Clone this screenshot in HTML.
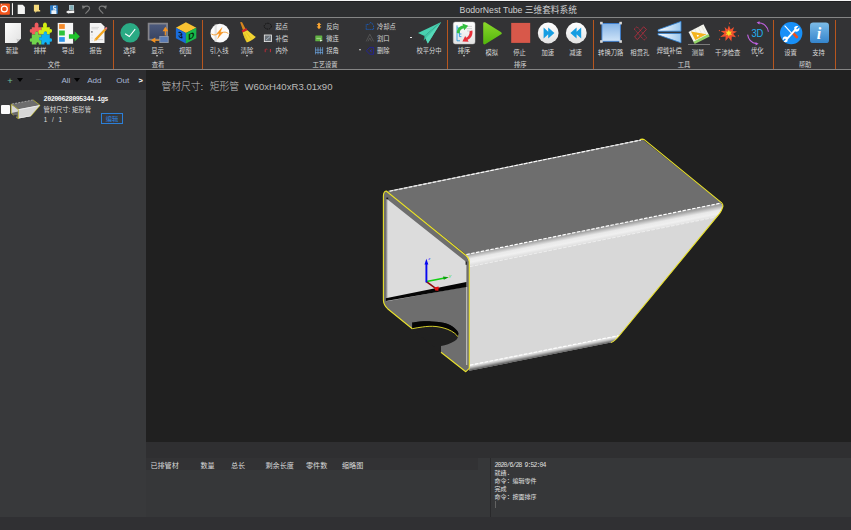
<!DOCTYPE html>
<html lang="zh-CN">
<head>
<meta charset="utf-8">
<title>BodorNest Tube 三维套料系统</title>
<style>
html,body{margin:0;padding:0;background:#1f1f1f;}
body{width:851px;height:530px;overflow:hidden;position:relative;font-family:"Liberation Sans","Noto Sans CJK SC",sans-serif;color:#e6e6e6;}
.abs{position:absolute;}
#topline{left:0;top:0;width:851px;height:1px;background:#f6f6f6;}
#titlebar{left:0;top:1px;width:851px;height:16px;background:#2d2e30;border-top:1px solid #202022;box-sizing:border-box;}
#titleline{left:0;top:17px;width:851px;height:1px;background:#858585;}
#ribbon{left:0;top:18px;width:851px;height:51px;background:#333335;}
#ribbonline{left:0;top:69px;width:851px;height:1px;background:#858585;}
#leftbar{left:0;top:70px;width:146px;height:20px;background:#2d2d30;}
#leftlist{left:0;top:90px;width:146px;height:427px;background:#38393b;}
#viewport{left:146px;top:70px;width:705px;height:372px;background:#202020;}
#bband{left:146px;top:442px;width:705px;height:16px;background:#2f2f31;}
#bbody{left:146px;top:458px;width:705px;height:59px;background:#363739;}
#bhead{left:146px;top:458px;width:332px;height:12px;background:#323234;}
#bdiv{left:490px;top:458px;width:1px;height:59px;background:#29292b;}
#status{left:0;top:517px;width:851px;height:13px;background:#303033;}
.sep{width:1px;top:20px;height:49px;background:#b8561e;}
.t{position:absolute;white-space:nowrap;line-height:1;}
.lbl{font-size:6.3px;color:#dadada;transform:translateX(-50%);}
.grp{font-size:6.3px;color:#d6d6d6;transform:translateX(-50%);}
.sm{font-size:6.3px;color:#dadada;}
.lt{font-size:8.1px;}
.li{font-size:6.3px;color:#dcdcdc;}
.th{font-size:7.1px;color:#dadada;}
.log{font-size:6px;color:#e0e0e0;font-family:"Liberation Mono","Noto Sans CJK SC",monospace;}
.lat{font-size:6.4px;letter-spacing:-0.84px;}
.dd{width:0;height:0;border-left:1.6px solid transparent;border-right:1.6px solid transparent;border-top:2px solid #d0d0d0;}
.ddk{width:0;height:0;border-left:3.1px solid transparent;border-right:3.1px solid transparent;border-top:4.9px solid #030303;}
</style>
</head>
<body>
<div class="abs" id="topline"></div>
<div class="abs" id="titlebar"></div>
<div class="abs" id="titleline"></div>
<div class="abs" id="ribbon"></div>
<div class="abs" id="ribbonline"></div>
<div class="abs" id="leftbar"></div>
<div class="abs" id="leftlist"></div>
<div class="abs" id="viewport"></div>
<div class="abs" id="bband"></div>
<div class="abs" id="bbody"></div>
<div class="abs" id="bhead"></div>
<div class="abs" id="bdiv"></div>
<div class="abs" id="status"></div>

<!-- ribbon group separators -->
<div class="abs sep" style="left:113px"></div>
<div class="abs sep" style="left:202px"></div>
<div class="abs sep" style="left:447px"></div>
<div class="abs sep" style="left:593px"></div>
<div class="abs sep" style="left:773px"></div>
<div class="abs sep" style="left:835px"></div>

<!-- GRAPHICS -->
<svg class="abs" id="gfx" style="left:0;top:0" width="851" height="530" viewBox="0 0 851 530">
<defs>
<linearGradient id="gBandTop" gradientUnits="userSpaceOnUse" x1="594" y1="228.6" x2="596.5" y2="241.4">
<stop offset="0" stop-color="#9a9a9a"/><stop offset="0.12" stop-color="#a6a6a6"/><stop offset="0.45" stop-color="#e9e9e9"/><stop offset="0.7" stop-color="#f0f0f0"/><stop offset="1" stop-color="#dcdcdc"/>
</linearGradient>
<linearGradient id="gBandBot" gradientUnits="userSpaceOnUse" x1="540" y1="351.3" x2="541.1" y2="356.9">
<stop offset="0" stop-color="#f2f2f2"/><stop offset="0.35" stop-color="#c8c8c8"/><stop offset="1" stop-color="#4a4a4a"/>
</linearGradient>
<linearGradient id="gInner" gradientUnits="userSpaceOnUse" x1="385.8" y1="0" x2="388" y2="0">
<stop offset="0" stop-color="#707070"/><stop offset="1" stop-color="#dcdcdc"/>
</linearGradient>
</defs>
<!-- ICONS-START -->
<defs>
<linearGradient id="gDoc" x1="0" y1="0" x2="1" y2="1"><stop offset="0" stop-color="#fdfdfd"/><stop offset="1" stop-color="#e2e2e2"/></linearGradient>
<linearGradient id="gPlay" x1="0" y1="0" x2="0" y2="1"><stop offset="0" stop-color="#8ad82a"/><stop offset="1" stop-color="#52b40c"/></linearGradient>
<linearGradient id="gBtn" x1="0" y1="0" x2="0" y2="1"><stop offset="0" stop-color="#ffffff"/><stop offset="1" stop-color="#e2e2e2"/></linearGradient>
<linearGradient id="gSq" x1="0" y1="0" x2="0" y2="1"><stop offset="0" stop-color="#86b4e6"/><stop offset="1" stop-color="#cfe4f8"/></linearGradient>
<linearGradient id="gInfo" x1="0" y1="0" x2="0" y2="1"><stop offset="0" stop-color="#7cbce8"/><stop offset="1" stop-color="#3484cc"/></linearGradient>
<linearGradient id="gScr" x1="0" y1="0" x2="0" y2="1"><stop offset="0" stop-color="#4d5b7e"/><stop offset="1" stop-color="#384360"/></linearGradient>
<linearGradient id="gWedge" x1="0" y1="0" x2="1" y2="0"><stop offset="0" stop-color="#ffffff"/><stop offset="1" stop-color="#9cc8ee"/></linearGradient>
</defs>
<g id="qat">
<rect x="0" y="3.4" width="9.9" height="11.4" rx="0.8" fill="#f4551c"/>
<circle cx="4.35" cy="9" r="2.95" fill="none" stroke="#ffffff" stroke-width="1.25"/>
<path d="M1.3,3.8 L1.9,5.4" stroke="#fff" stroke-width="0.6"/>
<rect x="11.9" y="3.2" width="1.1" height="11.9" fill="#f0f0f0"/>
<path d="M17.7,4.8 L22.7,4.8 L24.9,7 L24.9,14 L17.7,14 Z" fill="#f4f4f4"/>
<path d="M33.9,4.8 L39,4.8 L39,10 L40.2,10.2 L40.2,11.6 L36.6,11.6 L35.6,13.1 L35.2,11.6 L33.9,11.4 Z" fill="#f6d97c"/>
<rect x="50" y="5.2" width="7.8" height="8.8" rx="0.8" fill="#2b78c2"/>
<rect x="51.4" y="10.4" width="5" height="3.6" fill="#eef3f8"/>
<path d="M56,6.2 L53.6,6.2 L53.6,8.4 L55.8,8.4 L55.8,10 L53,10" fill="none" stroke="#fff" stroke-width="0.9"/>
<rect x="69" y="5" width="5" height="5.4" fill="#a9bcc6"/>
<rect x="70.4" y="5.6" width="2.6" height="4" fill="#7fb0b8"/>
<path d="M66,12 L68.6,10.2 L68.6,10.9 L74.2,10.6 L74.2,13 L68.6,13.2 L68.6,13.8 Z" fill="#f2f2f2"/>
<path d="M83.8,7.2 C85.8,5.4 89.5,5.8 89.6,8.3 C89.6,9.9 87.4,11.6 85.4,13.6" fill="none" stroke="#7c7c7c" stroke-width="1.15"/>
<path d="M81.9,5.5 L86,6.1 L82.7,9.2 Z" fill="#7c7c7c"/>
<path d="M104.9,7.2 C102.9,5.4 99.2,5.8 99.1,8.3 C99.1,9.9 101.3,11.6 103.3,13.6" fill="none" stroke="#7c7c7c" stroke-width="1.15"/>
<path d="M106.8,5.5 L102.7,6.1 L106,9.2 Z" fill="#7c7c7c"/>
</g>
<g id="g-file">
<!-- new -->
<path d="M5,22.9 L21,22.9 L21,38.6 L16.6,43 L5,43 Z" fill="url(#gDoc)"/>
<path d="M21,38.6 L16.6,43 C17.6,41.6 17.2,39.8 16.2,38.8 C17.8,39.4 19.6,39.4 21,38.6 Z" fill="#c9c9c9"/>
<!-- puzzle -->
<g>
<path d="M31.8,27.2 L35,27.2 C34.2,25.6 34.6,22.4 36.6,22.4 C38.6,22.4 39,25.6 38.2,27.2 L41.4,27.2 L41.4,30.4 C43,29.6 44.4,30.2 44.4,31.8 L41.4,34.6 L38,34.6 C38.6,33 38.2,31.6 36.8,31.6 C35.4,31.6 35,33 35.6,34.6 L31.8,34.6 L31.8,32.4 C30.2,33.2 29.8,32 29.8,30.8 C29.8,29.6 30.4,28.6 31.8,29.4 Z" fill="#f05c5e"/>
<path d="M41.4,27.2 L43.4,27.2 C42.6,25.6 43,22.4 45,22.4 C47,22.4 47.4,25.6 46.6,27.2 L49.8,27.2 L49.8,29.4 C51.4,28.6 52,29.6 52,30.8 C52,32 51.4,33.2 49.8,32.4 L49.8,34.6 L46.8,34.6 C47.4,33 47,31.4 45.6,31.4 C44.2,31.4 43.6,33 44.2,34.6 L41.4,34.6 L41.4,33.6 C39.6,34.4 38.6,33.4 38.6,31.8 C38.6,30.2 40,29.6 41.4,30.4 Z" fill="#d2ee12"/>
<path d="M31.8,34.6 L35.2,34.6 C34.6,33 35,31.6 36.6,31.6 C38.2,31.6 38.6,33 38,34.6 L41.4,34.6 L41.4,37.6 C40,36.8 39,37.6 39,38.8 C39,40 40,40.8 41.4,40 L41.4,44.6 L38.6,44.6 C39.2,43.2 38.6,42.2 37.6,42.2 C36.6,42.2 36,43.2 36.6,44.6 L31.8,44.6 L31.8,41.6 C30.2,42.4 29.8,41.2 29.8,40 C29.8,38.8 30.4,37.8 31.8,38.6 Z" fill="#6fd64c"/>
<path d="M41.4,34.6 L43.8,34.6 C43.2,33 43.8,31.6 45.4,31.6 C47,31.6 47.4,33 46.8,34.6 L49.8,34.6 L49.8,38.6 C51.4,37.8 52,38.8 52,40 C52,41.2 51.4,42.4 49.8,41.6 L49.8,44.6 L46.6,44.6 C47.2,43.2 46.6,42.2 45.6,42.2 C44.6,42.2 44,43.2 44.6,44.6 L41.4,44.6 L41.4,40 C39.8,40.8 39,40 39,38.8 C39,37.6 39.8,36.8 41.4,37.6 Z" fill="#12b2f2"/>
</g>
<!-- export -->
<rect x="57.7" y="22.9" width="15.4" height="20.8" fill="#f6f6f6"/>
<rect x="59.1" y="24.1" width="5.7" height="4.8" fill="#f58a2a"/>
<rect x="59.1" y="30.5" width="5.7" height="5" fill="#2ec23a"/>
<rect x="59.1" y="37.1" width="5.7" height="4.7" fill="#2e94ea"/>
<path d="M68.9,34.2 L74.6,34.2 L74.6,31.2 L79.8,36.4 L74.6,41.6 L74.6,38.8 L68.9,38.8 Z" fill="#1fc42a"/>
<!-- report -->
<path d="M89.8,22.9 L101,22.9 L104.5,26.6 L104.5,43 L89.8,43 Z" fill="#f4f4f4"/>
<path d="M91.4,27.4 L99,27.4 M91.4,28.8 L98,28.8" stroke="#d0d0d0" stroke-width="0.8"/>
<rect x="91.2" y="31.2" width="1.4" height="1.4" fill="#555"/>
<path d="M91.6,35 L92.6,35 M91.6,38 L92.6,38 M91.6,40.6 L92.6,40.6 M96,39.6 L103,39.6" stroke="#c4c4c4" stroke-width="0.7"/>
<path d="M94.2,41.2 L94.8,38.8 L104.6,28.4 L106.2,29.9 L96.4,40.4 Z" fill="#f2a51e"/>
<path d="M94.2,41.2 L94.8,38.8 L96.4,40.4 Z" fill="#e9cfa0"/>
<path d="M104.6,28.4 L105.7,27.2 C106.4,26.6 107.6,27.6 107.2,28.6 L106.2,29.9 Z" fill="#f07a7a"/>
</g>
<g id="g-view">
<circle cx="130.1" cy="32.8" r="9.7" fill="#2aaa84"/>
<path d="M125.1,33.7 L129.3,36.5 L135.2,29.1" fill="none" stroke="#ffffff" stroke-width="1.05"/>
<!-- display -->
<rect x="148.6" y="23.6" width="18.5" height="16" fill="url(#gScr)" stroke="#86868c" stroke-width="1.7"/>
<rect x="159.8" y="36.4" width="8.4" height="6.2" fill="#5c7cb4" stroke="#9aa0ac" stroke-width="0.8"/>
<path d="M165.3,35.6 L165.3,30.6 L163.6,30.6 L165.4,27.8 L167.2,30.6 L165.6,30.6" fill="#f5921e" stroke="#f5921e" stroke-width="1.1"/>
<path d="M159.2,40.2 L154.8,40.2 L154.8,38.4 L152,40.2 L154.8,42 L154.8,40.2" fill="#f5921e" stroke="#f5921e" stroke-width="1.1"/>
<!-- cube -->
<polygon points="185.9,22.2 196.3,27.8 185.9,33 175.9,27.8" fill="#f9c232"/>
<polygon points="175.9,27.8 185.9,33 185.9,43.5 175.9,38.2" fill="#1a6cdc"/>
<polygon points="185.9,33 196.3,27.8 196.3,38.2 185.9,43.5" fill="#18b84a"/>
<text font-size="8.4" font-weight="bold" font-family="Liberation Sans, sans-serif" fill="#08122c" transform="translate(178.3,36.8) skewY(27)">3</text>
<text font-size="8.4" font-weight="bold" font-family="Liberation Sans, sans-serif" fill="#052408" transform="translate(188.2,40.2) skewY(-27)">D</text>
</g>
<!-- ICONS-END -->
<!-- ICONS2-START -->
<g id="g-craft">
<!-- lead line -->
<circle cx="219.9" cy="33.2" r="9.4" fill="#fbfbfb"/>
<rect x="214.6" y="24.6" width="2.2" height="17.2" fill="#e2e2e2"/>
<path d="M211.4,34 C214,35.6 216.4,35 218,33.6 M222,32.8 C224,31.6 226.4,32 228.4,33.6" fill="none" stroke="#f59a28" stroke-width="0.9"/>
<path d="M222,27.6 L216.8,33.8 L219.4,33.8 L217.6,38.6 L223,32.2 L220.4,32.2 Z" fill="#f5921e" stroke="#f5921e" stroke-width="0.4"/>
<!-- broom -->
<path d="M240.2,22.6 C241,21.8 242,22 242.4,22.8 L245.6,29 L243,30.2 Z" fill="#d8861e"/>
<path d="M241.6,30.6 L246.4,28.2 L247.4,30.2 L242.6,32.6 Z" fill="#d81e28"/>
<path d="M242.6,32.6 L247.4,30.2 C250,32.4 253.4,35 255.8,37 C253.4,39.6 250,41.6 246.8,42.4 C245.4,40 243.6,36.4 242.6,32.6 Z" fill="#f2d432"/>
<path d="M244.6,33.4 L248,41 M246.4,32.4 L251.6,39.6 M243.6,34 L246.4,41.4" stroke="#d4b018" stroke-width="0.5" fill="none"/>
<!-- small icons col 1 -->
<ellipse cx="267.8" cy="26.2" rx="3.6" ry="2.9" fill="none" stroke="#0c0c0c" stroke-width="0.8" stroke-dasharray="1.6 0.8"/>
<rect x="264.3" y="35" width="7.2" height="6.6" fill="#6a7076" stroke="#f0f0f0" stroke-width="0.8"/>
<path d="M266,40 L270,36.6" stroke="#b0c4d8" stroke-width="0.8"/>
<path d="M265.2,52.2 L265.2,49.6 C265.6,48.8 266.8,48.8 267.2,49.6" fill="none" stroke="#d8283a" stroke-width="0.8"/>
<path d="M270.4,49 L270.4,52.2" stroke="#d8283a" stroke-width="0.9"/>
<!-- small icons col 2 -->
<path d="M319,22.4 L321.4,25 L320,25 L320,26.6 L321.4,26.6 L319,29.2 L316.6,26.6 L318,26.6 L318,25 L316.6,25 Z" fill="#f8a432"/>
<rect x="315.3" y="35.5" width="7" height="5.8" rx="0.6" fill="#62b244"/>
<path d="M316.4,38.4 L321,38.4" stroke="#b8e0a0" stroke-width="0.8"/>
<path d="M320,39.4 L322.6,40.4 L320,41.6 Z" fill="#e8f4e0"/>
<path d="M315.6,47.2 L315.6,54.4 M318,47.2 L318,54.4 M320.4,47.2 L320.4,54.4 M322.6,47.2 L322.6,54.4 M315.2,50 L323,50 M315.2,52.6 L323,52.6" stroke="#6ea8e4" stroke-width="0.7" fill="none"/>
<!-- small icons col 3 -->
<path d="M366.2,29.4 L366.2,24.4 L369,24.4 L370.4,22.6 L371.8,22.8 L372.6,24.6 L373.6,25.4 L373.6,29.4 Z" fill="none" stroke="#1464d8" stroke-width="0.8" stroke-dasharray="1.2 0.7"/>
<path d="M366.2,41.4 L369.8,34.2 L373.6,41.4 M368,41.4 L369.8,38 L371.6,41.4" fill="none" stroke="#5e5e5e" stroke-width="0.7"/>
<path d="M373.6,47.4 L369.6,47.4 L366.4,50.8 L369.6,54.2 L373.6,54.2 Z" fill="none" stroke="#2020a8" stroke-width="0.8"/>
<path d="M371.6,49.8 L370.2,50.8 L371.6,51.8" fill="none" stroke="#2a2ad0" stroke-width="0.8"/>
<!-- plane -->
<polygon points="441.2,22 418,33 424.5,36" fill="#48d0b0"/>
<polygon points="441.2,22 424.5,36 423.6,40.8" fill="#2ea88c"/>
<polygon points="441.2,22 424.5,36 427.8,43.4" fill="#40c6a6"/>
<polygon points="441.2,22 425.6,38.6 427.8,43.4" fill="#56d8b8"/>
</g>
<g id="g-sort">
<rect x="453.3" y="22" width="21.7" height="21.9" rx="2" fill="url(#gBtn)" stroke="#c8c8c8" stroke-width="0.5"/>
<path d="M457,25.4 L457,40.8 L460,40.8 M457,28 L459.4,28 M457,32.4 L459.4,32.4 M459.4,30.6 L459.4,36.6 L461.4,36.6 M459.4,34 L461.4,34" fill="none" stroke="#2a9ade" stroke-width="0.9"/>
<path d="M466.4,26.4 L472,26.4 M466.4,28.6 L472,28.6 M467,31 L472,31" stroke="#c4c4c4" stroke-width="0.7"/>
<path d="M456.8,33 C457,28.6 459.6,26.2 463,25.6 L462.4,23.6 L468.2,25.8 L464.2,30.2 L463.6,28.2 C461.2,28.8 459.6,30.4 459.4,33.4 Z" fill="#34c040"/>
<path d="M472.4,30.4 C473,35 470.8,38.4 467.6,39.8 L468.6,41.8 L462.4,41.4 L465.2,36 L466.2,37.8 C468.4,36.6 469.8,34.4 469.6,31.2 Z" fill="#e8303a"/>
<!-- play -->
<path d="M483.2,23.6 C483.2,22.2 484.4,21.8 485.6,22.6 L500.8,32 C502.2,32.8 502.2,33.8 500.8,34.6 L485.6,44 C484.4,44.8 483.2,44.4 483.2,43 Z" fill="url(#gPlay)"/>
<!-- stop -->
<rect x="511.2" y="22.9" width="19" height="20" fill="#d8584a"/>
<!-- ff / rew -->
<circle cx="548.2" cy="33" r="10.4" fill="url(#gBtn)"/>
<path d="M543.6,27.6 L549.6,33 L543.6,38.4 Z M548.2,27.6 L554.4,33 L548.2,38.4 Z" fill="#169ee2"/>
<circle cx="576.3" cy="33" r="10.4" fill="url(#gBtn)"/>
<path d="M581.2,27.6 L575.2,33 L581.2,38.4 Z M576.6,27.6 L570.4,33 L576.6,38.4 Z" fill="#169ee2"/>
</g>
<g id="g-tools">
<rect x="601.9" y="23.5" width="18.5" height="17.8" fill="url(#gSq)" stroke="#3c80d4" stroke-width="0.9"/>
<rect x="600.1" y="21.8" width="2.6" height="2.6" fill="#d8d8d8"/><rect x="619.3" y="21.8" width="2.6" height="2.6" fill="#d8d8d8"/>
<rect x="600.1" y="40.2" width="2.6" height="2.6" fill="#d8d8d8"/><rect x="619.3" y="40.2" width="2.6" height="2.6" fill="#d8d8d8"/>
<!-- intersecting hole -->
<g fill="none" stroke="#d42c40" stroke-width="0.7">
<path d="M634.2,29 L637,26.6 L646.8,37.8 L644,40.2 Z" stroke-dasharray="1.4 0.7"/>
<path d="M643.6,26.8 L646.4,29.4 L637.4,39.6 L634.6,37 Z"/>
</g>
<!-- weld -->
<path d="M658,29.8 L681,21.4 L681,31.2 L658,31.2 Z" fill="url(#gWedge)" stroke="#2e84d8" stroke-width="0.8"/>
<path d="M658,33.4 L681,33.4 L681,42.8 L658,34.8 Z" fill="url(#gWedge)" stroke="#2e84d8" stroke-width="0.8"/>
<!-- measure -->
<g transform="rotate(-27 699 34)">
<rect x="690.6" y="27.4" width="16.8" height="12" fill="#f6f6f0"/>
<path d="M693.4,27.4 L693.4,39.4 M697.4,27.4 L697.4,39.4 M701.4,27.4 L701.4,39.4 M705,27.4 L705,39.4" stroke="#e0e0d4" stroke-width="0.6"/>
<polygon points="693,28.2 705.6,37.6 693,37.6" fill="#f4b41e"/>
<rect x="690.6" y="38.4" width="16.8" height="2.6" fill="#92d466"/>
<path d="M696.4,33.6 L698.4,35.2 L696.4,36.4 Z" fill="#fff"/>
</g>
<rect x="688" y="44.1" width="22" height="0.8" fill="#8e8e8e"/>
<!-- explosion -->
<polygon points="728.9,25.6 730.6,29.6 734,27 732.8,31 737,31.6 733.2,33.8 736,37.2 731.8,36.4 731.4,41.6 728.6,37.4 725.4,41 725.6,36.4 720.2,37 724.4,33.6 720.6,31 725.4,30.8 724.6,27 727.4,29.6" fill="#f2512e"/>
<polygon points="728.8,29.8 729.8,31.8 732,31.4 730.6,33.2 732,35 729.8,34.6 728.8,36.6 727.8,34.6 725.6,35 727,33.2 725.6,31.4 727.8,31.8" fill="#f2e424"/>
<circle cx="719.4" cy="30.6" r="0.6" fill="#f2512e"/><circle cx="738.4" cy="35.8" r="0.6" fill="#f2512e"/><circle cx="729.6" cy="23.2" r="0.6" fill="#f2512e"/><circle cx="719.6" cy="39.2" r="0.6" fill="#f2512e"/>
<!-- 3D -->
<text x="751.4" y="37.2" font-size="11.2" font-family="Liberation Sans, sans-serif" fill="#22b0f0" textLength="12" lengthAdjust="spacingAndGlyphs">3D</text>
<path d="M758.6,22.8 C764,23 768,27 768.4,31.8" fill="none" stroke="#c162e2" stroke-width="1.1"/>
<path d="M756.6,22.6 L759.6,21.2 L759.4,24.4 Z" fill="#c162e2"/>
<path d="M747.6,34.6 C748.4,39.6 752,43 756.6,43.6" fill="none" stroke="#c162e2" stroke-width="1.1"/>
<path d="M758.6,43.8 L755.6,42.2 L755.6,45.4 Z" fill="#c162e2"/>
</g>
<g id="g-help">
<circle cx="791.2" cy="33.1" r="11.2" fill="#1890f8"/>
<path d="M784.6,25.6 L792,33.6" stroke="#ffffff" stroke-width="1.1"/>
<path d="M791.2,33 L793.2,31.2 L798.2,36.6 C798.8,37.4 797,39.2 796.2,38.4 Z" fill="#f0501e"/>
<path d="M786.6,39.4 L795.4,29.6" stroke="#ffffff" stroke-width="1.9"/>
<path d="M794.2,27.2 C795.4,25.8 797.4,25.6 798.4,26.2 L796.2,28.4 L797,29.6 L799.4,27.6 C799.8,29 799.2,30.8 797.6,31.6 C796.4,32 795.2,31.6 794.6,31 Z" fill="#ffffff"/>
<path d="M787.6,41.2 C786.4,42.4 784.6,42.4 783.6,41.6 L785.8,39.6 L785,38.4 L782.8,40.2 C782.4,38.8 783,37.2 784.6,36.6 C785.8,36.2 786.8,36.6 787.4,37.2 Z" fill="#ffffff"/>
<rect x="810" y="22.5" width="19" height="20.6" rx="3.2" fill="url(#gInfo)"/>
<text x="816.8" y="39.2" font-size="16" font-family="Liberation Serif, serif" font-style="italic" font-weight="bold" fill="#ffffff">i</text>
</g>
<!-- ICONS2-END -->
<!-- THUMB-START -->
<g id="thumb">
<polygon points="11.2,104.48 11.44,104.08 18.45,109.49 18.45,118.36 18.2,118.65 16.08,117.07 16.08,116.59 17.52,115.78 15.66,114.97 13.62,115.19 11.25,113.2" fill="#6c6c6c"/>
<polygon points="11.42,104.73 18.23,109.81 18.23,111.59 11.42,112.88" fill="#d6d6d6"/>
<polygon points="11.47,104.08 33.12,99.9 39.86,105.05 18.2,109.21" fill="#6e6e6e"/>
<polygon points="18.45,109.81 18.2,109.21 39.88,105.13 39.71,105.86 31.19,115.74 30.48,116.31 18.45,118.59" fill="#d6d6d6"/>
<polygon points="18.2,109.21 39.79,105.08 39.63,106.02 18.45,110.19" fill="#ececec"/>
<polygon points="18.45,117.88 30.65,115.62 30.48,116.31 18.45,118.59" fill="#f4f4f4"/>
<g fill="none" stroke="#e8de1c" stroke-width="0.55">
<polyline points="13.62,115.19 11.25,113.2 11.2,104.48 11.44,104.08 18.37,109.36 18.45,118.36 18.2,118.65 16.08,117.07"/>
<polyline points="33.12,99.9 39.88,105.13 39.71,105.86 31.19,115.74 30.48,116.31"/>
</g>
<path d="M11.93,104 L32.93,99.96" stroke="#f0f0f0" stroke-width="0.5" stroke-dasharray="2 1.2"/>
</g>
<!-- THUMB-END -->
<g id="model">
<!-- left end loop base (wall thickness + bottom inner face) -->
<path d="M383.4,300 L383.4,196 Q383.5,191.6 386.2,191 L465.7,255.2 Q469.3,258 469.3,262 L469.3,368.4 L465.8,371.7 L441,352.3 L441,338 L412.3,322 L412.3,328.7 L387.6,308.7 Q383.6,305 383.4,300 Z" fill="#6e6e6e"/>
<!-- inner left wall -->
<path d="M385.6,200 Q386,198.6 387.6,199.4 L464.8,260.8 Q466.4,262 466.4,264 L466.4,290 L385.6,302 Z" fill="url(#gInner)"/>
<rect x="386.4" y="197.6" width="1.8" height="1.6" fill="#1a1a1a"/>
<rect x="465.6" y="261.6" width="1.2" height="3.2" fill="#1a1a1a"/>
<!-- bottom inner face -->
<polygon points="385.6,301.5 466.4,286.5 466.4,368 441.4,352 441.4,338 412.3,322 400,318 385.6,306" fill="#6e6e6e"/>
<!-- black stripe -->
<polygon points="385.8,298.2 466.4,282.1 466.4,287 385.8,301" fill="#060606"/>
<!-- light vertical stripe inner rounding -->
<rect x="466" y="287" width="1.3" height="78" fill="#b8b8b8"/>
<!-- notch: hole, black wall, yellow arc -->
<path d="M412.3,322.8 C418,321.6 425,321.2 431,321.4 C437,321.6 441,322.2 444.5,323.1 C449,324.4 452.6,326.2 454.7,328.2 C457,330.2 458.2,331.8 458.4,333.3 L458,337 C457.4,339 456,340.2 454.7,341 C452.6,342.4 450.2,343.5 448,344.3 C445.8,345.1 443.6,345.6 441,346 L441,352.6 L412.3,329.2 Z" fill="#202020"/>
<path d="M412.3,322.8 C418,321.6 425,321.2 431,321.4 C437,321.6 441,322.2 444.5,323.1 C449,324.4 452.6,326.2 454.7,328.2 C457,330.2 458.2,331.8 458.4,333.3 L457.8,336.7 C457,335.4 456,334.2 454.7,333.3 C452.8,331.8 450.6,330.5 447.9,329.4 C444,327.9 440,327 436,326.5 C431.4,326.1 426.8,326.3 422.4,327 C418.8,327.5 415.4,328 412.3,328.7 Z" fill="#050505"/>
<path d="M412.3,328.7 C415.4,328 418.8,327.5 422.4,327 C426.8,326.3 431.4,326.1 436,326.5 C440,327 444,327.9 447.9,329.4 C450.6,330.5 452.8,331.8 454.7,333.3 C456,334.2 457,335.4 457.8,336.7" fill="none" stroke="#eae22c" stroke-width="0.9"/>
<!-- top face -->
<polygon points="386.6,191 642.2,139.2 721.8,203 466,254.6" fill="#6e6e6e"/>
<!-- front face -->
<path d="M469.3,262 L466,254.6 L720.4,203.3 Q723.4,204.4 722.4,207.6 Q721.6,210.6 719.6,213.4 L619.4,335.5 Q615,341 611,342.6 L469.3,370.8 Z" fill="#d8d8d8"/>
<!-- top rounded band -->
<path d="M466,254.6 L720.2,203.2 Q723.4,204.4 722.4,207.6 Q721.2,211.4 719.6,213.4 L715,217.2 L469.3,266.7 L469.3,262 Q469.3,258 466,254.6 Z" fill="url(#gBandTop)"/>
<!-- bottom rounded band -->
<path d="M469.3,365.3 L619.4,335.5 Q615,341 611,342.6 L469.3,370.8 Z" fill="url(#gBandBot)"/>
<!-- highlight dashed lines -->
<path d="M389.6,191.2 L641,140" stroke="#f4f4f4" stroke-width="1" fill="none" opacity="0.55"/>
<path d="M389.6,191.2 L641,140" stroke="#f8f8f8" stroke-width="1.15" stroke-dasharray="3.4 1.5" fill="none"/>
<path d="M466.4,254.5 L720,203.3" stroke="#ffffff" stroke-width="1.2" stroke-dasharray="3.4 1.5" fill="none"/>
<path d="M470,266.6 L715,217.3" stroke="#f8f8f8" stroke-width="0.9" stroke-dasharray="3.6 1.4" fill="none" opacity="0.7"/>
<path d="M470,365.1 L618.6,335.6" stroke="#ffffff" stroke-width="1.1" stroke-dasharray="3.4 1.6" fill="none"/>
<!-- yellow cut paths -->
<g fill="none" stroke="#eae22c" stroke-width="1.1" stroke-linejoin="round">
<path d="M412.3,328.7 L387.6,308.7 Q383.6,305 383.4,300 L383.4,196 Q383.5,191.6 386.2,191 L465.7,255.2 Q469.3,258 469.3,262 L469.3,368.4 L465.8,371.7 L441,352.3"/>
<path d="M640,139.5 L642.2,139.1 L644.2,139.6 L721.4,202.6 Q723.6,204.6 722.6,207.4 Q721.6,210.8 719.6,213.4 L619.4,335.5 Q615,341 611,342.6"/>
</g>
<!-- axis triad -->
<g>
<path d="M426.4,281.6 L437,289.4" stroke="#8c0a0a" stroke-width="1.6"/>
<path d="M434,287.6 L438.6,286.6 L438.4,290.8 L435.2,290.6 Z" fill="#e01212"/>
<path d="M426.6,281.4 L446,277.8" stroke="#12d012" stroke-width="1.5"/>
<path d="M443,276.4 L448.8,277.2 L443.8,279.8 Z" fill="#0aa00a"/>
<path d="M426.4,282.4 L426.4,263" stroke="#0808f0" stroke-width="1.9"/>
<path d="M424.5,264.6 L426.4,258.8 L428.3,264.6 Z" fill="#0808f0"/>
<text x="428.2" y="260.4" font-size="4.2" fill="#2c2cff" font-family="Liberation Sans, sans-serif" font-style="italic">z</text>
<text x="448.6" y="278.2" font-size="4.2" fill="#22dd22" font-family="Liberation Sans, sans-serif" font-style="italic">Y</text>
<text x="437.6" y="288.6" font-size="3.6" fill="#e01212" font-family="Liberation Sans, sans-serif" font-style="italic">x</text>
</g>
</g>
</svg>

<!-- TEXT-START -->
<span class="t" id="title" style="left:459.6px;top:6px;font-size:8.7px;color:#d0d0d0;">BodorNest Tube 三维套料系统</span>
<span class="t lbl" style="left:12px;top:47.699999999999996px;">新建</span>
<span class="t lbl" style="left:40px;top:47.699999999999996px;">排样</span>
<span class="t lbl" style="left:68px;top:47.699999999999996px;">导出</span>
<span class="t lbl" style="left:95.8px;top:47.699999999999996px;">报告</span>
<span class="t lbl" style="left:129.5px;top:48.099999999999994px;">选择</span>
<i class="abs dd" style="left:128.3px;top:55.2px"></i>
<span class="t lbl" style="left:157.5px;top:48.099999999999994px;">显示</span>
<i class="abs dd" style="left:156.3px;top:55.2px"></i>
<span class="t lbl" style="left:185.3px;top:48.099999999999994px;">视图</span>
<i class="abs dd" style="left:184.1px;top:55.2px"></i>
<span class="t lbl" style="left:219.2px;top:48.099999999999994px;">引入线</span>
<i class="abs dd" style="left:218.0px;top:55.2px"></i>
<span class="t lbl" style="left:247px;top:48.099999999999994px;">清除</span>
<i class="abs dd" style="left:245.8px;top:55.2px"></i>
<span class="t lbl" style="left:429px;top:48.3px;">校平分中</span>
<span class="t lbl" style="left:464px;top:48.099999999999994px;">排序</span>
<i class="abs dd" style="left:462.8px;top:55.2px"></i>
<span class="t lbl" style="left:491.8px;top:50.4px;">模拟</span>
<span class="t lbl" style="left:519.5px;top:50.4px;">停止</span>
<span class="t lbl" style="left:547.7px;top:50.4px;">加速</span>
<span class="t lbl" style="left:575.5px;top:50.4px;">减速</span>
<span class="t lbl" style="left:610.7px;top:50.4px;">转换刀路</span>
<span class="t lbl" style="left:639.8px;top:50.4px;">相贯孔</span>
<span class="t lbl" style="left:669.3px;top:48.3px;">焊缝补偿</span>
<i class="abs dd" style="left:668.1px;top:55.2px"></i>
<span class="t lbl" style="left:698px;top:50.4px;">测量</span>
<span class="t lbl" style="left:727.7px;top:50.4px;">干涉检查</span>
<span class="t lbl" style="left:757.3px;top:48.3px;">优化</span>
<i class="abs dd" style="left:756.1px;top:55.2px"></i>
<span class="t lbl" style="left:790.5px;top:50.4px;">设置</span>
<span class="t lbl" style="left:818.6px;top:50.4px;">支持</span>
<span class="t sm" style="left:275.4px;top:24px;">起点</span>
<span class="t sm" style="left:275.4px;top:36px;">补偿</span>
<span class="t sm" style="left:275.4px;top:48px;">内外</span>
<span class="t sm" style="left:326.3px;top:24px;">反向</span>
<span class="t sm" style="left:326.3px;top:36px;">微连</span>
<span class="t sm" style="left:326.3px;top:48px;">拐角</span>
<span class="t sm" style="left:377px;top:24px;">冷却点</span>
<span class="t sm" style="left:377px;top:36px;">割口</span>
<span class="t sm" style="left:377px;top:48px;">删除</span>
<i class="abs dd" style="left:358.7px;top:49px"></i>
<i class="abs" style="left:409.9px;top:37px;width:2.4px;height:1.2px;background:#e8e8e8"></i>
<span class="t grp" style="left:54px;top:61.6px;">文件</span>
<span class="t grp" style="left:158px;top:61.6px;">查看</span>
<span class="t grp" style="left:325px;top:61.6px;">工艺设置</span>
<span class="t grp" style="left:520.2px;top:61.6px;">排序</span>
<span class="t grp" style="left:684px;top:61.6px;">工具</span>
<span class="t grp" style="left:805px;top:61.6px;">帮助</span>
<span class="t lt" style="left:7.2px;top:76px;color:#6fc3a0;font-size:9.5px;">+</span>
<i class="abs ddk" style="left:16.8px;top:78px"></i>
<span class="t lt" style="left:35.6px;top:75.4px;color:#6a6a6a;font-size:9.5px;">−</span>
<span class="t lt" style="left:61.4px;top:76.8px;color:#a9b8d6;">All</span>
<i class="abs ddk" style="left:73.7px;top:78px"></i>
<span class="t lt" style="left:87.2px;top:76.8px;color:#a9b8d6;">Add</span>
<span class="t lt" style="left:116.2px;top:76.8px;color:#a9b8d6;">Out</span>
<span class="t lt" style="left:138.4px;top:77px;color:#ffffff;font-weight:bold;font-size:7.6px;">&gt;</span>
<i class="abs" style="left:1px;top:105px;width:9px;height:9px;background:#fbfbfb;border-radius:1px"></i>
<span class="t mono" style="left:43.6px;top:95.8px;font-weight:bold;color:#f4f4f4;font-size:6.8px;font-family:'Liberation Mono',monospace;letter-spacing:-0.51px;">20200628095344.igs</span>
<span class="t li" style="left:43.4px;top:106.5px;">管材尺寸: 矩形管</span>
<span class="t li" style="left:43.8px;top:117px;letter-spacing:1.5px;">1 / 1</span>
<span class="t" style="left:101.4px;top:113px;width:19.2px;height:9.4px;border:1px solid #2b7fd8;color:#2b86e6;font-size:6.2px;line-height:9.4px;text-align:center;">编辑</span>
<span class="t" style="left:161.4px;top:81.9px;font-size:9.75px;color:#c6c6c6;font-weight:300;">管材尺寸:<span style="padding-left:6.6px;">矩形管</span><span style="font-size:9.6px;padding-left:5.6px;color:#bcbcbc;">W60xH40xR3.01x90</span></span>
<span class="t th" style="left:150.4px;top:463.1px;">已排管材</span>
<span class="t th" style="left:200.5px;top:463.1px;">数量</span>
<span class="t th" style="left:231px;top:463.1px;">总长</span>
<span class="t th" style="left:265.5px;top:463.1px;">剩余长度</span>
<span class="t th" style="left:306px;top:463.1px;">零件数</span>
<span class="t th" style="left:342px;top:463.1px;">缩略图</span>
<span class="t log" style="left:494.6px;top:463px;"><span class="lat">2020/6/28 9:52:04</span></span>
<span class="t log" style="left:494.6px;top:471px;">就绪<span class="lat">.</span></span>
<span class="t log" style="left:494.6px;top:479px;">命令<span class="lat">: </span>编辑零件</span>
<span class="t log" style="left:494.6px;top:487px;">完成</span>
<span class="t log" style="left:494.6px;top:495px;">命令<span class="lat">: </span>按面排序</span>
<i class="abs" style="left:494.6px;top:501px;width:1px;height:7.4px;background:#626262"></i>
<!-- TEXT-END -->
</body>
</html>
